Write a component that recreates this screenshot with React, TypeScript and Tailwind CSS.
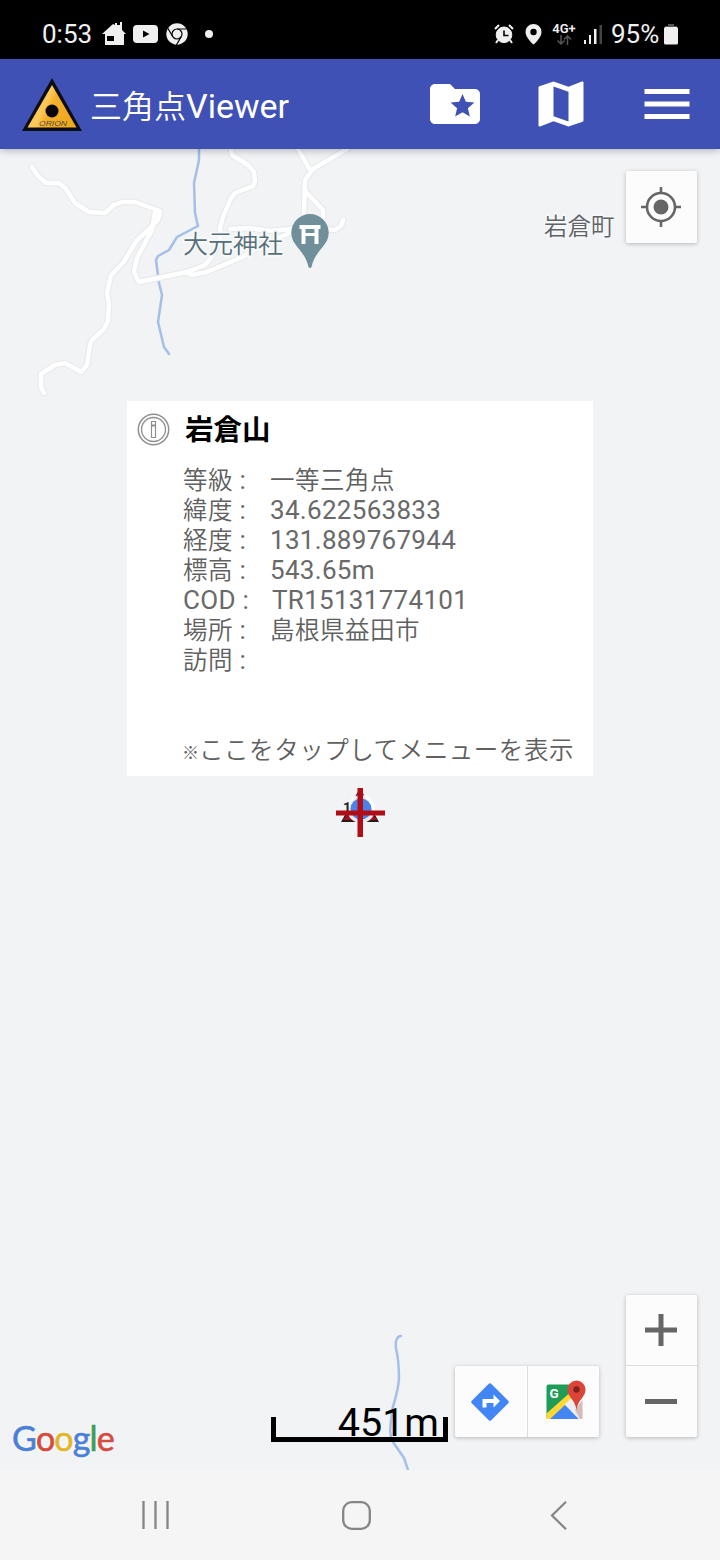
import React from 'react';

const DETAILS = [
  { label: '等級', value: '一等三角点', cjk: true },
  { label: '緯度', value: '34.622563833' },
  { label: '経度', value: '131.889767944' },
  { label: '標高', value: '543.65m' },
  { label: 'COD', value: 'TR15131774101' },
  { label: '場所', value: '島根県益田市', cjk: true },
  { label: '訪問', value: '' },
];

const ROADS = [
  'M32 18L38 27L46 34L59 34L66 40L75 54L89 63L105 64L114 56L122 53L135 53L160 62L158 71L145 84L137 91L123 114L111 126L107 144L109 155L108 172L104 180L92 191L90 196L87 216L81 223L65 214L55 216L41 225L41 238L44 244',
  'M155 63L152 81L137 109L134 123L139 133L187 123L205 116L213 106L220 92L220 79L223 68L230 51L235 44L253 37L255 32L254 23L248 16L232 6L231 0',
  'M185 123L192 126L207 123L240 109L262 96L290 84L310 80L335 81L341 77L343 71',
  'M230 80L250 79L270 82L292 80',
  'M347 0L313 20L305 31L304 66',
  'M298 0L310 21',
  'M306 43L323 61L323 76',
];

const RIVERS = [
  'M199 0L199 11L194 34L195 64L198 77L177 88L169 101L158 107L156 111L159 134L162 146L158 173L164 198L169 205',
  'M401 1187C397 1187 395 1192 396 1199C398 1208 399 1218 399 1229C398 1245 394 1252 392 1262C390 1280 389 1286 393 1293L404 1309L408 1321',
];

const StatusBar: React.FC = () => (
  <div className="flex h-[59px] items-center bg-black pt-[9px] pl-[42px] pr-[41px] text-[#f0f0f0]">
    <span className="w-[60px] text-[26px] leading-none">0:53</span>
    <svg className="h-6 w-6" viewBox="0 0 24 24" fill="currentColor">
      <path d="M0 12L11 2l2 1V1h2v2h3V0h2v8l4 4h-2v11H3V12z" />
      <path d="M5 14h7v5H5z" fill="#000" />
    </svg>
    <svg className="ml-[7px] h-[18px] w-[25px]" viewBox="0 0 25 18">
      <rect width="25" height="18" rx="4" fill="currentColor" />
      <path d="M10 5.500l6.500 3.500-6.500 3.500z" fill="#000" />
    </svg>
    <svg className="ml-2 h-[22px] w-[22px]" viewBox="0 0 22 22">
      <circle cx="11" cy="11" r="10.700" fill="currentColor" />
      <g fill="none" stroke="#000" strokeWidth="1.200">
        <circle cx="11" cy="11" r="5" />
        <path d="M11 6h9.600M6.700 13.500L1.800 5.200M15.300 13.500L10.400 22" />
      </g>
    </svg>
    <span className="ml-[17px] h-2 w-2 rounded-full bg-[#f0f0f0]" />

    <div className="ml-auto flex items-center">
      <svg className="h-[20px] w-[20px]" viewBox="0 0 20 20" fill="none" stroke="currentColor">
        <circle cx="10" cy="10.800" r="7.800" fill="currentColor" />
        <path d="M1 5L5 1M19 5l-4-4M4 16l-2 3M16 16l2 3" strokeWidth="2" />
        <path d="M10 6.500v5h4.500" stroke="#000" strokeWidth="1.600" />
      </svg>
      <svg className="ml-[11px] h-[21px] w-[17px]" viewBox="0 0 17 21">
        <path d="M8.500 0a8 8 0 0 0-8 8c0 6 8 12.500 8 12.500s8-6.500 8-12.500a8 8 0 0 0-8-8z" fill="currentColor" />
        <circle cx="8.500" cy="8" r="3.200" fill="#000" />
      </svg>
      <div className="ml-[10px] flex w-[24px] flex-col items-center">
        <span className="text-[13px] font-semibold leading-[11px]">4G+</span>
        <svg className="mt-px h-[10px] w-[16px]" viewBox="0 0 16 10" fill="none" stroke="#555" strokeWidth="1.500">
          <path d="M5 0v9M1.500 5.500L5 9l3.500-3.500M11.500 10V1M8 4.500L11.500 1 15 4.500" />
        </svg>
      </div>
      <svg className="ml-[8px] h-[19px] w-[18px]" viewBox="0 0 18 19" fill="currentColor">
        <path d="M0 15h2v4H0zM5 10h2v9H5zM10 4h2.500v15H10z" />
        <path d="M15.500 0H18v19h-2.500z" fill="#444" />
      </svg>
      <span className="ml-[9px] w-[49px] text-[26px] leading-none">95%</span>
      <svg className="ml-1 mr-px h-[21px] w-[14px]" viewBox="0 0 14 21">
        <path d="M4 0h6v2h3v3H1V2h3z" fill="#555" />
        <rect y="3" width="14" height="17.500" rx="1.500" fill="currentColor" />
      </svg>
    </div>
  </div>
);

const AppBar: React.FC = () => (
  <header className="relative z-10 flex h-[90px] items-center bg-[#3f51b5] pl-[22px] pr-[23px] text-white shadow-[0_1px_8px_rgba(0,0,0,0.3)]">
    <svg className="h-[53px] w-[60px]" viewBox="0 0 60 53">
      <defs>
        <linearGradient id="sign" x1="0" y1="0" x2="1" y2="0.400">
          <stop offset="0" stopColor="#f7b733" />
          <stop offset="0.450" stopColor="#fcca5c" />
          <stop offset="0.600" stopColor="#f5b02a" />
          <stop offset="1" stopColor="#f0a81f" />
        </linearGradient>
      </defs>
      <path d="M30 0L60 53H0z" fill="#0c0c14" />
      <path d="M30 7L54.500 49.500H5.500z" fill="url(#sign)" />
      <circle cx="30" cy="33" r="6.500" fill="#08080c" />
      <text x="17" y="48" textLength="28" lengthAdjust="spacingAndGlyphs" fontSize="6.500" fontStyle="italic" fill="#4d4a45" fontFamily="Liberation Sans, sans-serif">ORION</text>
    </svg>
    <h1 className="ml-[8px] flex items-baseline pt-[3px] text-[32px] leading-none">
      <span className="font-[350]">三角点</span>
      <span className="text-[34px]">Viewer</span>
    </h1>
    <div className="ml-auto flex gap-[46px]">
      <button aria-label="favorites">
        <svg className="h-[60px] w-[60px]" viewBox="0 0 24 24" fill="currentColor">
          <path d="M20 6h-8l-2-2H4c-1.100 0-2 .9-2 2v12c0 1.100.9 2 2 2h16c1.100 0 2-.9 2-2V8c0-1.100-.9-2-2-2zm-2.060 11L15 15.280 12.060 17l.78-3.330-2.590-2.240 3.410-.29L15 8l1.340 3.140 3.410.29-2.590 2.240.78 3.330z" />
        </svg>
      </button>
      <button aria-label="map">
        <svg className="h-[60px] w-[60px]" viewBox="0 0 24 24" fill="currentColor">
          <path d="M20.500 3l-.16.03L15 5.100 9 3 3.360 4.900c-.21.07-.36.25-.36.48V20.500c0 .28.22.5.5.5l.16-.03L9 18.900l6 2.100 5.640-1.900c.21-.07.36-.25.36-.48V3.500c0-.28-.22-.5-.5-.5zM15 19l-6-2.110V5l6 2.110V19z" />
        </svg>
      </button>
      <button aria-label="menu">
        <svg className="h-[60px] w-[60px]" viewBox="0 0 24 24" fill="currentColor">
          <path d="M3 18h18v-2H3v2zm0-5h18v-2H3v2zm0-7v2h18V6H3z" />
        </svg>
      </button>
    </div>
  </header>
);

const MapLines: React.FC = () => (
  <svg className="absolute inset-0 h-full w-full" viewBox="0 0 720 1321" fill="none" strokeLinejoin="round" strokeLinecap="round">
    {RIVERS.map((d) => (
      <path key={d} d={d} stroke="#a3bfea" strokeWidth="2.500" />
    ))}
    {ROADS.map((d) => (
      <path key={d} d={d} stroke="#e6e8ea" strokeWidth="6.500" />
    ))}
    {ROADS.map((d) => (
      <path key={d} d={d} stroke="#ffffff" strokeWidth="4.500" />
    ))}
  </svg>
);

const InfoWindow: React.FC = () => (
  <section className="absolute top-[252px] left-[127px] h-[375px] w-[466px] bg-white pt-3 pl-[10px] text-[#606060]">
    <div className="flex h-8 items-center">
      <svg className="h-[33px] w-[33px]" viewBox="0 0 33 33" fill="none" stroke="#8f8f8f">
        <circle cx="16.500" cy="16.500" r="15.200" strokeWidth="1.500" />
        <circle cx="16.500" cy="16.500" r="12" strokeWidth="1.300" />
        <path d="M14.500 8.500h4v3.500h-4zM14.500 13h4v11.500h-4z" strokeWidth="1.200" />
      </svg>
      <h2 className="ml-[15px] pt-1 text-[28.500px] font-bold leading-8 text-black">岩倉山</h2>
    </div>
    <dl className="mt-[20px] pl-[46px] text-[26px] leading-[30px] tracking-[0.300px] text-[#696969]">
      {DETAILS.map((row) => (
        <div key={row.label} className="flex h-[30px] items-baseline">
          {row.label === 'COD' ? (
            <dt className="w-[89px]">COD :</dt>
          ) : (
            <dt className="w-[87px]">
              <span className="text-[24.500px] font-[350] tracking-[0.400px] text-[#606060]">{row.label}</span> :
            </dt>
          )}
          <dd className={row.cjk ? 'text-[24.500px] font-[350] tracking-[0.500px] text-[#606060]' : ''}>{row.value}</dd>
        </div>
      ))}
    </dl>
    <p className="mt-[61px] flex items-baseline whitespace-nowrap pl-[45px] text-[24.500px] font-[350] leading-[30px] tracking-[0.550px]">
      <span className="w-[17px] text-[17px] font-medium">※</span>
      <span>ここをタップしてメニューを表示</span>
    </p>
  </section>
);

const Marker: React.FC = () => (
  <svg className="absolute top-[636px] left-[333px] h-[54px] w-[54px]" viewBox="0 0 54 54">
    <path d="M27 3L46 37H8z" fill="#2a1a1e" />
    <path d="M10 35l4-5 5 5zM35 35l5-5 4 5z" fill="#a3121c" />
    <circle cx="28" cy="24" r="14" fill="#ffffff" fillOpacity="0.900" />
    <circle cx="28" cy="24" r="10.500" fill="#4c82e8" />
    <text x="10" y="28" fontSize="14" fontWeight="bold" fill="#20242c">1</text>
    <path d="M3 25.500h49v5H3zM24.500 3h5.500v49h-5.500z" fill="#b00d17" />
  </svg>
);

const MapControls: React.FC = () => (
  <>
    <button aria-label="my location" className="absolute top-[22px] left-[626px] flex h-[72px] w-[71px] items-center justify-center rounded-[2px] bg-[#fcfcfc] shadow-[0_1px_4px_rgba(0,0,0,0.25)]">
      <svg className="mr-px h-10 w-10" viewBox="0 0 40 40" fill="none" stroke="#666" strokeWidth="2.600">
        <circle cx="20" cy="20" r="14" />
        <circle cx="20" cy="20" r="7.500" fill="#666" stroke="none" />
        <path d="M20 0v6M20 34v6M0 20h6M34 20h6" />
      </svg>
    </button>

    <div className="absolute top-[1146px] left-[626px] flex w-[71px] flex-col rounded-[2px] bg-[#fcfcfc] shadow-[0_1px_4px_rgba(0,0,0,0.25)]">
      <button aria-label="zoom in" className="flex h-[71px] items-center justify-center border-b border-[#dcdcdc]">
        <svg className="mr-[2px] h-8 w-8" viewBox="0 0 32 32" fill="#666">
          <path d="M13.500 0h5v13.500H32v5H18.500V32h-5V18.500H0v-5h13.500z" />
        </svg>
      </button>
      <button aria-label="zoom out" className="flex h-[71px] items-center justify-center">
        <svg className="mr-px h-[5px] w-8" viewBox="0 0 32 5" fill="#666">
          <path d="M0 0h32v5H0z" />
        </svg>
      </button>
    </div>

    <div className="absolute top-[1217px] left-[455px] flex h-[71px] rounded-[2px] bg-[#fcfcfc] shadow-[0_1px_4px_rgba(0,0,0,0.25)]">
      <button aria-label="directions" className="flex w-[73px] items-center justify-center border-r border-[#dcdcdc]">
        <svg className="mr-[2px] h-[38px] w-[38px]" viewBox="0 0 38 38">
          <path d="M17.800 .8a1.700 1.700 0 0 1 2.400 0l17 17a1.700 1.700 0 0 1 0 2.400l-17 17a1.700 1.700 0 0 1-2.400 0l-17-17a1.700 1.700 0 0 1 0-2.400z" fill="#4285f4" />
          <path d="M11.500 24.500v-8.500h11v-4.500l6.500 6.500-6.500 6.500V20h-7v4.500z" fill="#fff" />
        </svg>
      </button>
      <button aria-label="open in maps" className="flex w-[71px] items-center justify-center">
        <svg className="ml-[4px] mb-[4px] h-[40px] w-[40px]" viewBox="0 0 40 40">
          <path d="M2.500 4.500H30V39H2.500A2 2 0 0 1 .5 37V6.500a2 2 0 0 1 2-2z" fill="#1f9d58" />
          <path d="M24 14h8.500v25H24z" fill="#fcfcfc" />
          <path d="M18.500 24L33 39H4z" fill="#4285f4" />
          <path d="M.5 39v-5.500L22.500 14l5 5-9 6.500L4 39z" fill="#fdd835" />
          <path d="M18.500 24.500L26.500 17 37 29v10h-4z" fill="#eceef2" />
          <path d="M36.500 20v19h-2.500L29 30z" fill="#d9babb" />
          <path d="M30.500.5a9 9 0 0 0-9 9c0 8 7.500 9.500 9 20.500 1.500-11 9-12.500 9-20.500a9 9 0 0 0-9-9z" fill="#db4437" />
          <circle cx="30.500" cy="9.500" r="3.200" fill="#7b231e" />
          <text x="3.500" y="17.500" fontSize="13.500" fontWeight="bold" fill="#fff">G</text>
        </svg>
      </button>
    </div>
  </>
);

const ScaleBar: React.FC = () => (
  <div className="absolute top-[1268px] left-[271px] flex h-[25px] w-[177px] items-end justify-end border-x-[5px] border-b-[5px] border-black pr-[4px]">
    <span className="text-[39.500px] leading-[28px] text-black">451m</span>
  </div>
);

const GoogleLogo: React.FC = () => (
  <div className="absolute top-[1267px] left-[12px] flex text-[34px] leading-[44px] tracking-[-0.900px] [text-shadow:0_0_3px_#fff] font-['Lato',sans-serif]">
    <span className="text-[#4a80d8] [-webkit-text-stroke:0.600px_#4a80d8]">G</span>
    <span className="text-[#d34b41] [-webkit-text-stroke:0.600px_#d34b41]">o</span>
    <span className="text-[#e2b62b] [-webkit-text-stroke:0.600px_#e2b62b]">o</span>
    <span className="text-[#4a80d8] [-webkit-text-stroke:0.600px_#4a80d8]">g</span>
    <span className="text-[#3f9d57] [-webkit-text-stroke:0.600px_#3f9d57]">l</span>
    <span className="text-[#d34b41] [-webkit-text-stroke:0.600px_#d34b41]">e</span>
  </div>
);

const NavBar: React.FC = () => (
  <nav className="flex h-[90px] items-center bg-[#f5f5f5] pl-[142px] text-[#858585]">
    <svg className="h-7 w-[27px]" viewBox="0 0 27 28" fill="none" stroke="currentColor" strokeWidth="2.300">
      <path d="M1.500 0v28M13.500 0v28M25.500 0v28" />
    </svg>
    <svg className="ml-[173px] h-[29px] w-[29px]" viewBox="0 0 29 29" fill="none" stroke="currentColor" strokeWidth="2.300">
      <rect x="1.200" y="1.200" width="26.600" height="26.600" rx="8.500" />
    </svg>
    <svg className="ml-[179px] h-[29px] w-[17px]" viewBox="0 0 17 29" fill="none" stroke="currentColor" strokeWidth="2.200">
      <path d="M16 .8L2 14.500 16 28.200" />
    </svg>
  </nav>
);

const App: React.FC = () => {
  return (
    <div className="flex h-[1560px] w-[720px] flex-col overflow-hidden font-['Roboto','Noto_Sans_CJK_JP',sans-serif]">
      <StatusBar />
      <AppBar />
      <main className="relative h-[1321px] overflow-hidden bg-[#f1f3f4]">
        <MapLines />
        <ScaleBar />

        {/* Shrine pin */}
        <span className="absolute top-[79px] left-[183px] whitespace-nowrap text-[25px] font-[350] leading-[34px] text-[#566f78] [paint-order:stroke] [-webkit-text-stroke:4px_#f6f8f9]">
          大元神社
        </span>
        <svg className="absolute top-[64px] left-[290px] h-[56px] w-[40px]" viewBox="0 0 40 56">
          <path d="M20 1A18.700 18.700 0 0 0 1.300 19.700C1.300 33 15 37 18.500 54q1.500 2 3 0C25 37 38.700 33 38.700 19.700A18.700 18.700 0 0 0 20 1z" fill="#6f8f9b" />
          <path d="M9.500 12h21v4h-21zM11.500 16h4v15h-4zM24.500 16h4v15h-4zM15 20h10v3H15z" fill="#fff" />
        </svg>
        <span className="absolute top-[61px] left-[544px] whitespace-nowrap text-[23.500px] font-[350] leading-[34px] text-[#5f6368] [paint-order:stroke] [-webkit-text-stroke:3px_#f6f8f9]">
          岩倉町
        </span>

        <InfoWindow />
        <Marker />
        <MapControls />
        <GoogleLogo />
      </main>
      <NavBar />
    </div>
  );
};

export default App;
